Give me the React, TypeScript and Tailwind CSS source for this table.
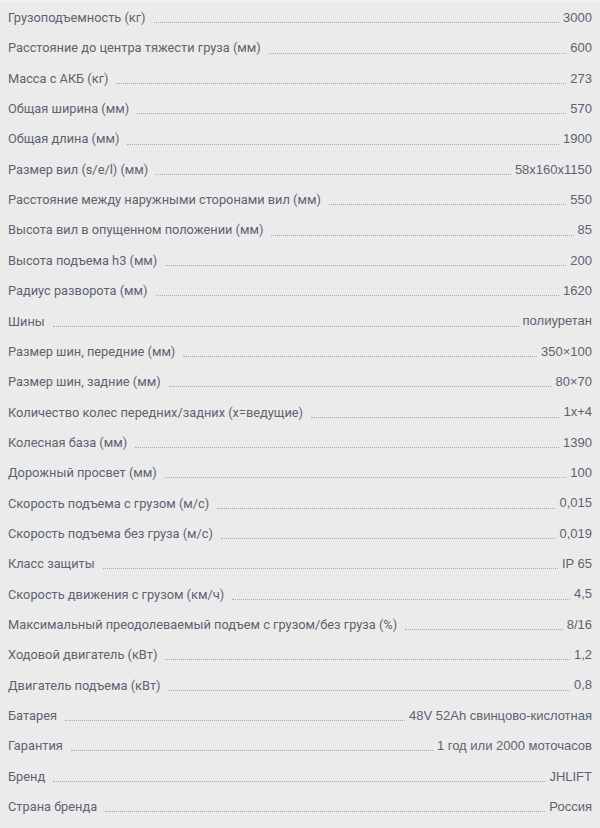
const specs: [string, string][] = [
  ["Грузоподъемность (кг)", "3000"],
  ["Расстояние до центра тяжести груза (мм)", "600"],
  ["Масса с АКБ (кг)", "273"],
  ["Общая ширина (мм)", "570"],
  ["Общая длина (мм)", "1900"],
  ["Размер вил (s/e/l) (мм)", "58x160x1150"],
  ["Расстояние между наружными сторонами вил (мм)", "550"],
  ["Высота вил в опущенном положении (мм)", "85"],
  ["Высота подъема h3 (мм)", "200"],
  ["Радиус разворота (мм)", "1620"],
  ["Шины", "полиуретан"],
  ["Размер шин, передние (мм)", "350×100"],
  ["Размер шин, задние (мм)", "80×70"],
  ["Количество колес передних/задних (x=ведущие)", "1x+4"],
  ["Колесная база (мм)", "1390"],
  ["Дорожный просвет (мм)", "100"],
  ["Скорость подъема с грузом (м/с)", "0,015"],
  ["Скорость подъема без груза (м/с)", "0,019"],
  ["Класс защиты", "IP 65"],
  ["Скорость движения с грузом (км/ч)", "4,5"],
  ["Максимальный преодолеваемый подъем с грузом/без груза (%)", "8/16"],
  ["Ходовой двигатель (кВт)", "1,2"],
  ["Двигатель подъема (кВт)", "0,8"],
  ["Батарея", "48V 52Ah свинцово-кислотная"],
  ["Гарантия", "1 год или 2000 моточасов"],
  ["Бренд", "JHLIFT"],
  ["Страна бренда", "Россия"],
];

export default function App() {
  return (
    <div className="relative min-h-[828px] w-[600px] bg-[#ebebeb] pt-[2.5px] text-[13px] text-[#5b6470]">
      <div className="pointer-events-none absolute inset-x-0 top-0 h-[3px] bg-gradient-to-b from-[#f6f6f6] to-transparent" />
      {specs.map(([label, value]) => (
        <div key={label} className="flex h-[30.35px] items-center px-2">
          <span className="whitespace-nowrap font-['Roboto',sans-serif] text-[12.8px]">{label}</span>
          <span className="mx-[8px] mr-[4px] mt-[10px] flex-1 border-b border-dotted border-[#a9a9a9]" />
          <span className="whitespace-nowrap font-['Liberation_Sans',Arial,sans-serif]">{value}</span>
        </div>
      ))}
    </div>
  );
}
